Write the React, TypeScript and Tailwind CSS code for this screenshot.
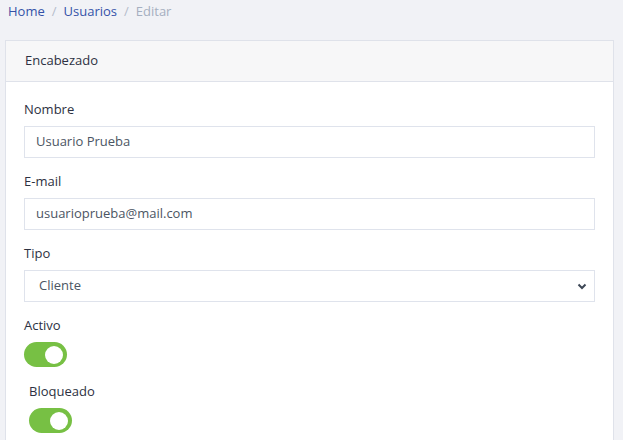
import React from "react";

const Toggle = () => (
  <div className="w-[43px] h-[25px] rounded-full bg-[#77c044] flex items-center justify-end pr-[4px]">
    <div className="w-[18px] h-[18px] rounded-full bg-white" />
  </div>
);

const Field = ({ label, value }: { label: string; value: string }) => (
  <div className="flex flex-col">
    <label className="text-[13px] text-[#2d3142] leading-[18px] h-[18px]">{label}</label>
    <div className="mt-[8px] h-[32px] border border-[#dfe3ec] flex items-center pl-[11px] text-[13px] text-[#4b5563]">
      {value}
    </div>
  </div>
);

const App = () => {
  return (
    <div
      className="w-[623px] h-[440px] overflow-hidden bg-[#f1f2f6]"
      style={{ fontFamily: "'Open Sans', 'Liberation Sans', sans-serif" }}
    >
      <nav className="flex items-center gap-[7px] pl-[8px] pt-[2px] h-[22px] text-[13px]">
        <span className="text-[#3452a8]">Home</span>
        <span className="text-[#b4bccb]">/</span>
        <span className="text-[#3452a8]">Usuarios</span>
        <span className="text-[#b4bccb]">/</span>
        <span className="text-[#a5afc0]">Editar</span>
      </nav>
      <div className="ml-[5px] mt-[18px] w-[609px] h-[420px] bg-white border border-[#dfe2ea]">
        <div className="h-[41px] bg-[#f7f7f8] border-b border-[#dfe2ea] flex items-center pl-[19px] text-[13px] text-[#2d3142]">
          Encabezado
        </div>
        <div className="pl-[18px] pr-[18px] pt-[18px] flex flex-col gap-[14px]">
          <Field label="Nombre" value="Usuario Prueba" />
          <Field label="E-mail" value="usuarioprueba@mail.com" />
          <div className="flex flex-col">
            <label className="text-[13px] text-[#2d3142] leading-[18px] h-[18px]">Tipo</label>
            <div className="mt-[8px] h-[32px] border border-[#dfe3ec] flex items-center justify-between pl-[14px] pr-[7px] text-[13px] text-[#4b5563]">
              <span>Cliente</span>
              <svg width="10" height="8" viewBox="0 0 10 8" className="text-[#3d4756]">
                <path d="M1.5 2.5 L5 6 L8.5 2.5" fill="none" stroke="currentColor" strokeWidth="2" />
              </svg>
            </div>
          </div>
          <div className="flex flex-col">
            <label className="text-[13px] text-[#2d3142] leading-[18px] h-[18px]">Activo</label>
            <div className="mt-[8px]">
              <Toggle />
            </div>
          </div>
          <div className="flex flex-col pl-[5px] mt-[1px]">
            <label className="text-[13px] text-[#2d3142] leading-[18px] h-[18px]">Bloqueado</label>
            <div className="mt-[8px]">
              <Toggle />
            </div>
          </div>
        </div>
      </div>
    </div>
  );
};

export default App;
